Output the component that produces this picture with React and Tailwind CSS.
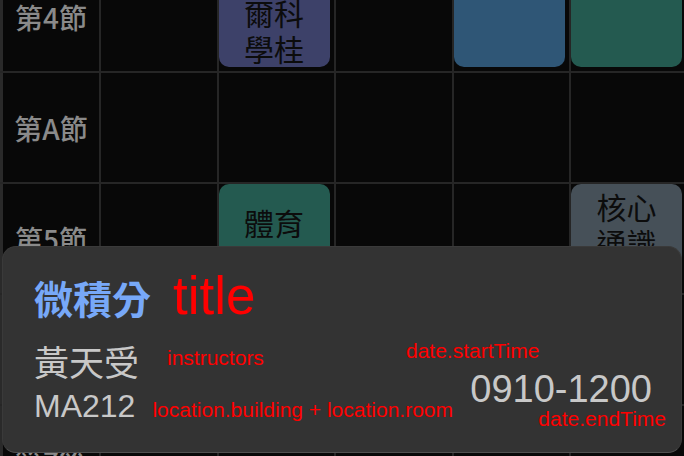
import React from "react";

const cjk = { fontFamily: '"Noto Sans CJK TC", "Liberation Sans", sans-serif' };
const lat = { fontFamily: '"Liberation Sans", "Noto Sans CJK TC", sans-serif' };

function Head({ label }) {
  return (
    <div className="bg-[#080808] border-l-[3px] border-[#2a2a2a] flex items-center justify-center">
      <span className="text-[28px] text-[#8a8a8a] font-medium leading-none" style={cjk}>{label}</span>
    </div>
  );
}

function Cell({ children }) {
  return <div className="bg-[#080808] flex flex-col">{children}</div>;
}

export default function App() {
  return (
    <div className="relative w-[684px] h-[456px] overflow-hidden bg-[#080808]">
      <div className="-mt-[38px] w-[688px] grid grid-cols-[99px_repeat(5,115.5px)] grid-rows-[repeat(5,109px)] gap-[2px] bg-[#262626]">
        {/* row 4 */}
        <Head label="第4節" />
        <Cell />
        <Cell>
          <div className="w-[111px] flex-1 mb-[4px] rounded-[10px] bg-[#3d4169] overflow-hidden flex flex-col justify-end items-center text-[30px] leading-[36px] text-[#0c0c0c]" style={cjk}>
            <div className="mb-[1px] flex flex-col items-center">
              <span>諾貝</span>
              <span>爾科</span>
              <span>學桂</span>
            </div>
          </div>
        </Cell>
        <Cell />
        <Cell>
          <div className="w-[111px] flex-1 mb-[4px] rounded-[10px] bg-[#2f5676]" />
        </Cell>
        <Cell>
          <div className="w-[111px] flex-1 mb-[4px] rounded-[10px] bg-[#245a50]" />
        </Cell>
        {/* row A */}
        <Head label="第A節" />
        <Cell />
        <Cell />
        <Cell />
        <Cell />
        <Cell />
        {/* row 5 */}
        <Head label="第5節" />
        <Cell />
        <Cell>
          <div className="w-[111px] flex-1 rounded-[10px] bg-[#245a50] overflow-hidden flex flex-col items-center pt-[20px] text-[30px] leading-[36px] text-[#0c0c0c]" style={cjk}>
            <span>體育</span>
          </div>
        </Cell>
        <Cell />
        <Cell />
        <Cell>
          <div className="w-[111px] flex-1 rounded-[10px] bg-[#465058] overflow-hidden flex flex-col items-center pt-[4px] text-[30px] leading-[36px] text-[#0c0c0c]" style={cjk}>
            <span>核心</span>
            <span>通識</span>
          </div>
        </Cell>
        {/* row 6 */}
        <Head label="第6節" />
        <Cell />
        <Cell />
        <Cell />
        <Cell />
        <Cell />
        {/* row 7 */}
        <Head label="第7節" />
        <Cell />
        <Cell />
        <Cell />
        <Cell />
        <Cell />
      </div>

      {/* bottom sheet */}
      <div className="absolute left-[2px] top-[246px] w-[680px] h-[207px] rounded-[14px] bg-[#333333] border border-[#3a3a3a] border-b-[#505050] flex pl-[31px] pr-[15px]">
        <div className="flex-1 min-w-0 flex flex-col whitespace-nowrap">
          <div className="mt-[25px] flex items-baseline gap-[22px]">
            <span className="text-[39px] leading-[48px] font-bold text-[#77a8f8]" style={cjk}>微積分</span>
            <span className="text-[53px] leading-[48px] text-[#ff0000]" style={lat}>title</span>
          </div>
          <div className="mt-[20px] flex items-start gap-[28px]">
            <span className="text-[35px] leading-[40px] text-[#c8c8c8]" style={cjk}>黃天受</span>
            <span className="mt-[5px] text-[21px] leading-[24px] text-[#ff0000]" style={lat}>instructors</span>
          </div>
          <div className="mt-[7px] flex items-baseline gap-[17px]">
            <span className="text-[32px] leading-[36px] text-[#c8c8c8]" style={lat}>MA212</span>
            <span className="text-[21px] leading-[24px] text-[#ff0000]" style={lat}>location.building + location.room</span>
          </div>
        </div>
        <div className="w-[260px] shrink-0 flex flex-col whitespace-nowrap">
          <span className="mt-[92px] text-[21px] leading-[24px] text-[#ff0000] self-start" style={lat}>date.startTime</span>
          <span className="mt-[6px] mr-[14px] text-[38px] leading-[40px] text-[#c8c8c8] self-end" style={lat}>0910-1200</span>
          <span className="-mt-[2px] text-[21px] leading-[24px] text-[#ff0000] self-end" style={lat}>date.endTime</span>
        </div>
      </div>
    </div>
  );
}
